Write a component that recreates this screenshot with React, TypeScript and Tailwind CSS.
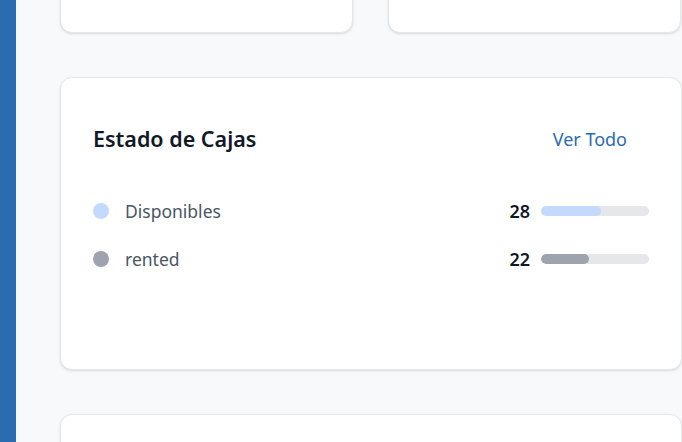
import React from 'react';

const items = [
  { label: 'Disponibles', value: 28, dot: 'bg-[#c3dafe]', bar: 'bg-[#c3dafe]' },
  { label: 'rented', value: 22, dot: 'bg-[#9ea3ae]', bar: 'bg-[#9ea3ae]' },
];
const total = 50;

const App = () => {
  return (
    <div className="h-[442px] w-[682px] overflow-hidden flex bg-[#f8f9fb] font-['Noto_Sans',sans-serif]">
      {/* Sidebar */}
      <div className="w-4 shrink-0 bg-[#2b6cb0]"></div>

      {/* Main */}
      <div className="flex-1 pl-11 -mt-[100px] flex flex-col gap-11">
        <div className="shrink-0 grid grid-cols-[293px_293px] gap-[35px]">
          <div className="h-[133px] bg-white rounded-xl border border-[#e5e7eb] shadow-sm"></div>
          <div className="h-[133px] bg-white rounded-xl border border-[#e5e7eb] shadow-sm"></div>
        </div>

        <div className="shrink-0 h-[293px] bg-white rounded-xl border border-[#e5e7eb] shadow-sm px-8 pt-[41px]">
          <div className="flex items-center justify-between h-10">
            <h2 className="text-[21.5px] font-semibold text-[#111827]">Estado de Cajas</h2>
            <button className="px-[22px] py-2 text-[18px] text-[#2b6cb0]">Ver Todo</button>
          </div>

          <div className="mt-10 space-y-6">
            {items.map((item) => (
              <div key={item.label} className="flex items-center h-6">
                <span className={`w-4 h-4 rounded-full ${item.dot}`}></span>
                <span className="ml-4 text-[17.5px] text-[#4b5563]">{item.label}</span>
                <span className="ml-auto text-[18px] font-semibold text-[#111827]">{item.value}</span>
                <div className="ml-[11px] w-[108px] h-2.5 rounded-full bg-[#e5e7eb] overflow-hidden">
                  <div
                    className={`h-full rounded-full ${item.bar}`}
                    style={{ width: `${(item.value / total) * 100}%` }}
                  ></div>
                </div>
              </div>
            ))}
          </div>
        </div>

        <div className="shrink-0 h-[200px] bg-white rounded-xl border border-[#e5e7eb] shadow-sm"></div>
      </div>
    </div>
  );
};

export default App;
